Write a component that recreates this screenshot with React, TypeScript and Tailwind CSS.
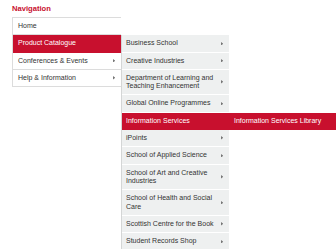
import React from 'react';

const sub = [
  { label: 'Business School', arrow: true },
  { label: 'Creative Industries', arrow: true },
  { label: 'Department of Learning and Teaching Enhancement', arrow: true },
  { label: 'Global Online Programmes', arrow: true },
  { label: 'Information Services', active: true },
  { label: 'iPoints', arrow: true },
  { label: 'School of Applied Science', arrow: true },
  { label: 'School of Art and Creative Industries', arrow: true },
  { label: 'School of Health and Social Care', arrow: true },
  { label: 'Scottish Centre for the Book', arrow: true },
  { label: 'Student Records Shop', arrow: true },
];

const Arrow = () => (
  <svg width="2.5" height="3.5" viewBox="0 0 3 4" className="shrink-0">
    <path d="M0 0 L3 2 L0 4 Z" fill="#777" />
  </svg>
);

export default function App() {
  return (
    <div className="w-[336px] h-[249px] overflow-hidden bg-white font-['Liberation_Sans',Arial,sans-serif] text-[7px] leading-[8.3px] text-[#333]">
      <div className="pl-[12px] pt-[4px]">
        <h2 className="text-[7.6px] leading-[9px] font-bold text-[#c8102e] h-[13px]">Navigation</h2>
        <ul className="w-[109px] border-l border-t border-[#dcdcdc]">
          <li className="px-[5px] py-[4px] border-b border-[#dcdcdc]">Home</li>
          <li className="relative px-[5px] py-[4px] border-b border-[#c8102e] bg-[#c8102e] text-white">
            Product Catalogue
            <ul className="absolute left-full top-0 w-[108px] bg-[#eef0f0] border-l border-[#d4d6d6]">
              {sub.map((s) => (
                <li
                  key={s.label}
                  className={`relative flex items-center justify-between gap-[6px] pl-[4px] pr-[6px] py-[4px] border-b ${
                    s.active ? 'bg-[#c8102e] text-white border-[#c8102e]' : 'text-[#333] border-white'
                  }`}
                >
                  <span>{s.label}</span>
                  {s.arrow && <Arrow />}
                  {s.active && (
                    <ul className="absolute left-full top-0 w-[108px] bg-[#c8102e] text-white">
                      <li className="pl-[5px] py-[4px] border-b border-[#c8102e]">Information Services Library</li>
                    </ul>
                  )}
                </li>
              ))}
            </ul>
          </li>
          <li className="flex items-center justify-between pl-[5px] pr-[6px] py-[4px] border-b border-[#dcdcdc]">
            <span>Conferences &amp; Events</span>
            <Arrow />
          </li>
          <li className="flex items-center justify-between pl-[5px] pr-[6px] py-[4px] border-b border-[#dcdcdc]">
            <span>Help &amp; Information</span>
            <Arrow />
          </li>
        </ul>
      </div>
    </div>
  );
}
